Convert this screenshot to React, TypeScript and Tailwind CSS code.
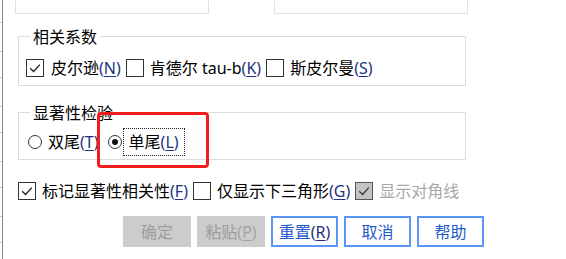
import React from "react";

function Mn({ k, dim }: { k: string; dim?: boolean }) {
  return (
    <span className={dim ? "text-[#a3a3a3]" : "text-[#1d327f]"}>
      (<span className="underline underline-offset-[2px] decoration-[1px]">{k}</span>)
    </span>
  );
}

function Check({ checked, disabled }: { checked?: boolean; disabled?: boolean }) {
  return (
    <div
      className={
        disabled
          ? "w-[18px] h-[18px] shrink-0 border-[1.5px] border-[#555] bg-[#c4c4c4] flex items-center justify-center"
          : "w-[18px] h-[18px] shrink-0 border-[1.5px] border-[#333] bg-white flex items-center justify-center"
      }
    >
      {checked && (
        <svg width="14" height="14" viewBox="0 0 14 14">
          <path d="M2.2 7.2 L5.6 10.4 L11.8 3.6" stroke={disabled ? "#3a3a3a" : "#222"} strokeWidth="1.4" fill="none" />
        </svg>
      )}
    </div>
  );
}

function Radio({ on }: { on?: boolean }) {
  return (
    <div className="w-[14px] h-[14px] shrink-0 rounded-full border-[1.5px] border-[#333] bg-white flex items-center justify-center">
      {on && <div className="w-[6px] h-[6px] rounded-full bg-[#111]" />}
    </div>
  );
}

function Btn({ children, disabled }: { children: React.ReactNode; disabled?: boolean }) {
  return (
    <div
      className={
        disabled
          ? "w-[68px] h-[31px] bg-[#cccccc] text-[#9c9c9c] flex items-center justify-center"
          : "w-[67px] h-[31px] bg-white border-2 border-[#5b95f6] text-[#1f5bc8] flex items-center justify-center"
      }
    >
      {children}
    </div>
  );
}

export default function App() {
  const ticks = ["h-[23px]", "h-[29px]", "h-[26px]", "h-[29px]", "h-[26px]", "h-[29px]", "h-[26px]", "h-[29px]", "h-[26px]"];
  return (
    <div className="relative w-[566px] h-[259px] overflow-hidden bg-white text-[16px] leading-[20px] text-black font-['Noto_Sans','Noto_Sans_CJK_SC',sans-serif] flex">
      {/* left window edge */}
      <div className="w-[3px] h-full border-r border-[#8c8c8c] flex flex-col">
        {ticks.map((t, i) => (
          <div key={i} className={`${t} w-[2px] shrink-0 border-b border-[#c8c8c8]`} />
        ))}
      </div>

      <div className="flex-1 flex flex-col pl-[15px]">
        {/* top boxes */}
        <div className="flex -ml-[3px] gap-[65px]">
          <div className="w-[194px] h-[14px] border-x border-b border-[#e2e2e2]" />
          <div className="w-[194px] h-[14px] border-x border-b border-[#e2e2e2]" />
        </div>

        {/* 相关系数 */}
        <div className="mt-[22px] w-[448px] h-[50px] border border-[#dcdcdc] flex flex-col">
          <div className="-mt-[10px] ml-[11px] w-fit px-[3px] bg-white h-[20px]">相关系数</div>
          <div className="mt-[11px] pl-[7px] flex items-center h-[20px]">
            <Check checked />
            <span className="ml-[7px]">
              皮尔逊<Mn k="N" />
            </span>
            <div className="ml-[5px]">
              <Check />
            </div>
            <span className="ml-[6px]">
              肯德尔 tau-b<Mn k="K" />
            </span>
            <div className="ml-[5px]">
              <Check />
            </div>
            <span className="ml-[6px]">
              斯皮尔曼<Mn k="S" />
            </span>
          </div>
        </div>

        {/* 显著性检验 */}
        <div className="mt-[26px] w-[448px] h-[48px] border border-[#dcdcdc] flex flex-col">
          <div className="-mt-[10px] ml-[11px] w-fit px-[3px] bg-white h-[20px]">显著性检验</div>
          <div className="mt-[9px] pl-[9px] flex items-center h-[20px]">
            <Radio />
            <span className="ml-[6px]">
              双尾<Mn k="T" />
            </span>
            <div className="ml-[9px]">
              <Radio on />
            </div>
            <span className="ml-[1px] border border-dotted border-[#222] px-[5px] py-[3px]">
              单尾<Mn k="L" />
            </span>
          </div>
        </div>

        {/* options row */}
        <div className="mt-[21px] flex items-center h-[20px]">
          <Check checked />
          <span className="ml-[6px]">
            标记显著性相关性<Mn k="F" />
          </span>
          <div className="ml-[5px]">
            <Check />
          </div>
          <span className="ml-[6px]">
            仅显示下三角形<Mn k="G" />
          </span>
          <div className="ml-[5px]">
            <Check checked disabled />
          </div>
          <span className="ml-[6px] text-[#a8a8a8]">显示对角线</span>
        </div>

        {/* buttons */}
        <div className="mt-[15px] ml-[105px] flex gap-[6px]">
          <Btn disabled>确定</Btn>
          <Btn disabled>
            粘贴<Mn k="P" dim />
          </Btn>
          <Btn>
            重置<Mn k="R" />
          </Btn>
          <Btn>取消</Btn>
          <Btn>帮助</Btn>
        </div>
      </div>

      {/* red highlight annotation */}
      <div className="absolute left-[97px] top-[112px] w-[112px] h-[56px] border-[3px] border-[#ef1d1d] rounded-[4px]" />
    </div>
  );
}
